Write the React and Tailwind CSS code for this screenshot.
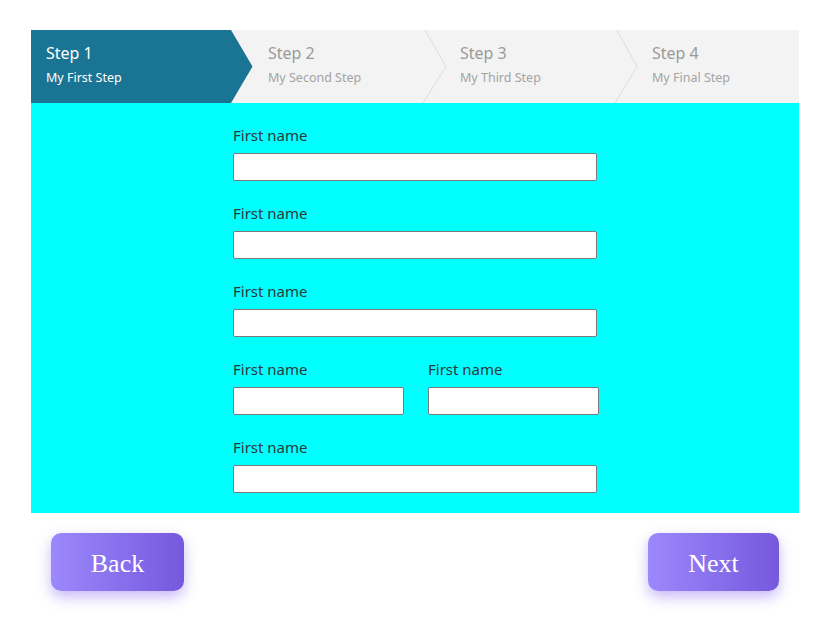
import React from "react";

const steps = [
  { t: "Step 1", s: "My First Step", active: true },
  { t: "Step 2", s: "My Second Step" },
  { t: "Step 3", s: "My Third Step" },
  { t: "Step 4", s: "My Final Step" },
];

function Field({ className = "" }) {
  return (
    <div className={"flex flex-col " + className}>
      <label className="text-[15px] leading-[16px] text-[#2b3a3a] h-[26px]">First name</label>
      <input className="h-[28px] w-full bg-white border border-[#7a7a7a] rounded-[2px] outline-none" />
    </div>
  );
}

export default function App() {
  return (
    <div className="w-[829px] h-[623px] bg-white pt-[30px] pl-[31px]" style={{ fontFamily: '"Noto Sans", "Open Sans", sans-serif' }}>
      <div className="w-[768px]">
        <div className="relative h-[73px] bg-[#f3f3f3] flex">
          <svg className="absolute inset-0" width="768" height="73" viewBox="0 0 768 73">
            <polygon points="0,0 200,0 221.5,36.5 200,73 0,73" fill="#1a7494" />
            <polyline points="394,0 415,36.5 392,73" fill="none" stroke="#dcdcdc" strokeWidth="1" />
            <polyline points="586,0 606,36.5 584,73" fill="none" stroke="#dcdcdc" strokeWidth="1" />
          </svg>
          {steps.map((st, i) => (
            <div key={i} className={"relative w-[192px] pt-[12px] " + (i === 0 ? "pl-[15px]" : "pl-[45px]")}>
              <div className={"text-[16px] leading-[22px] " + (st.active ? "text-white" : "text-[#9a9a9a]")}>{st.t}</div>
              <div className={"text-[12.5px] leading-[18px] mt-[5px] " + (st.active ? "text-white" : "text-[#a3a3a3]")}>{st.s}</div>
            </div>
          ))}
        </div>
        <div className="bg-[#00ffff] h-[410px] pt-[24px] pl-[202px]">
          <div className="w-[364px] flex flex-col gap-[24px]">
            <Field />
            <Field />
            <Field />
            <div className="flex gap-[24px] w-[366px]">
              <Field className="w-[171px]" />
              <Field className="w-[171px]" />
            </div>
            <Field />
          </div>
        </div>
        <div className="flex justify-between px-[20px] pt-[20px]">
          <button className="w-[133px] h-[58px] pt-[4px] rounded-[10px] text-white text-[26px] leading-[30px] bg-gradient-to-r from-[#9c88fc] to-[#7658dd] shadow-[0_6px_14px_rgba(130,100,240,0.45)]" style={{ fontFamily: '"Liberation Serif", serif' }}>Back</button>
          <button className="w-[131px] h-[58px] pt-[4px] rounded-[10px] text-white text-[26px] leading-[30px] bg-gradient-to-r from-[#9c88fc] to-[#7658dd] shadow-[0_6px_14px_rgba(130,100,240,0.45)]" style={{ fontFamily: '"Liberation Serif", serif' }}>Next</button>
        </div>
      </div>
    </div>
  );
}
